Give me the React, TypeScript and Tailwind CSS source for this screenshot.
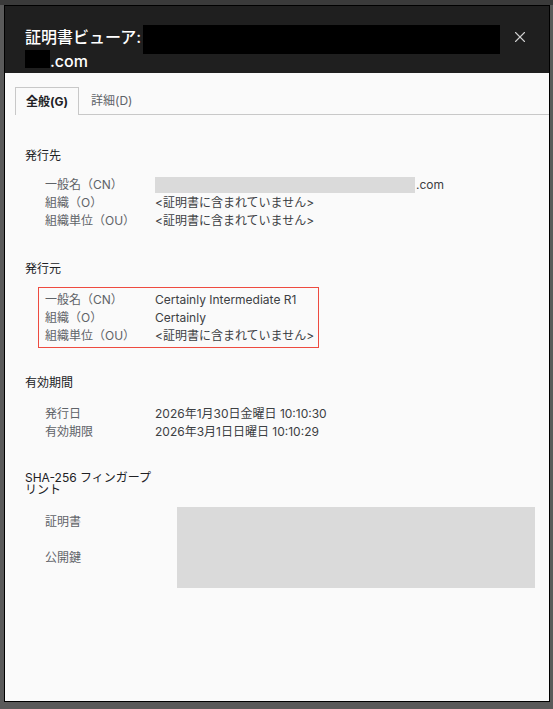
import { X } from "lucide-react";

const font = "font-['Inter','Noto_Sans_CJK_JP',sans-serif]";

function Row({ label, children }: { label: string; children: React.ReactNode }) {
  return (
    <div className="flex h-[18px] items-center">
      <div className="w-[110px] shrink-0 text-[#5f6368]">{label}</div>
      <div className="flex items-center text-[#3c4043]">{children}</div>
    </div>
  );
}

const missing = "<証明書に含まれていません>";

export default function App() {
  return (
    <div className={`w-[553px] h-[709px] bg-[#5a5a5a] border-t-[5px] border-[#3a3a3a] pl-[4px] ${font}`}>
      <div className="w-[546px] h-[697px] border border-black flex flex-col bg-[#fafafa]">
        {/* Header */}
        <div className="h-[67px] bg-[#1f1f1f] flex pl-[20px] pr-[20px] pt-[19px] text-white text-[16px] font-medium leading-[24px]">
          <div className="flex-1">
            <div className="flex items-center h-[24px]">
              <span>証明書ビューア:</span>
              <span className="inline-block ml-[2px] w-[357px] h-[29px] mt-[4px] bg-black"></span>
            </div>
            <div className="flex items-center h-[24px]">
              <span className="inline-block w-[25px] h-[18px] -mt-[4px] bg-black"></span>
              <span>.com</span>
            </div>
          </div>
          <div className="pt-[3px]">
            <X size={18} strokeWidth={1.5} className="text-[#cfcfcf]" />
          </div>
        </div>

        {/* Tabs */}
        <div className="pt-[14px] pl-[10px] flex items-end text-[12px]">
          <div className="h-[28px] px-[10px] flex items-center border border-b-0 border-[#c8c8c8] font-bold text-[#202124]">
            全般(G)
          </div>
          <div className="flex-1 h-[28px] border-b border-[#c8c8c8] flex items-center pl-[12px] text-[#5f6368]">
            詳細(D)
          </div>
        </div>

        {/* Content */}
        <div className="px-[20px] text-[12px] leading-[18px]">
          <div className="mt-[32px] text-[#202124]">発行先</div>
          <div className="mt-[11px] pl-[20px]">
            <Row label="一般名（CN）">
              <span className="inline-block w-[260px] h-[16px] bg-[#dadada]"></span>
              <span className="ml-[1px]">.com</span>
            </Row>
            <Row label="組織（O）">{missing}</Row>
            <Row label="組織単位（OU）">{missing}</Row>
          </div>

          <div className="mt-[30px] text-[#202124]">発行元</div>
          <div className="mt-[9px] ml-[13px] w-[281px] border border-[#ee4b40] pl-[6px] pt-[3px] pb-[2px]">
            <Row label="一般名（CN）">Certainly Intermediate R1</Row>
            <Row label="組織（O）">Certainly</Row>
            <Row label="組織単位（OU）">{missing}</Row>
          </div>

          <div className="mt-[26px] text-[#202124]">有効期間</div>
          <div className="mt-[13px] pl-[20px]">
            <Row label="発行日">2026年1月30日金曜日 10:10:30</Row>
            <Row label="有効期限">2026年3月1日日曜日 10:10:29</Row>
          </div>

          <div className="mt-[31px] w-[132px] leading-[12px] text-[#202124]">SHA-256 フィンガープリント</div>
          <div className="mt-[11px] pl-[20px] flex">
            <div className="w-[132px] shrink-0 text-[#5f6368] pt-[6px]">
              <div>証明書</div>
              <div className="mt-[18px]">公開鍵</div>
            </div>
            <div className="w-[358px] shrink-0 h-[81px] bg-[#dadada]"></div>
          </div>
        </div>
      </div>
    </div>
  );
}
